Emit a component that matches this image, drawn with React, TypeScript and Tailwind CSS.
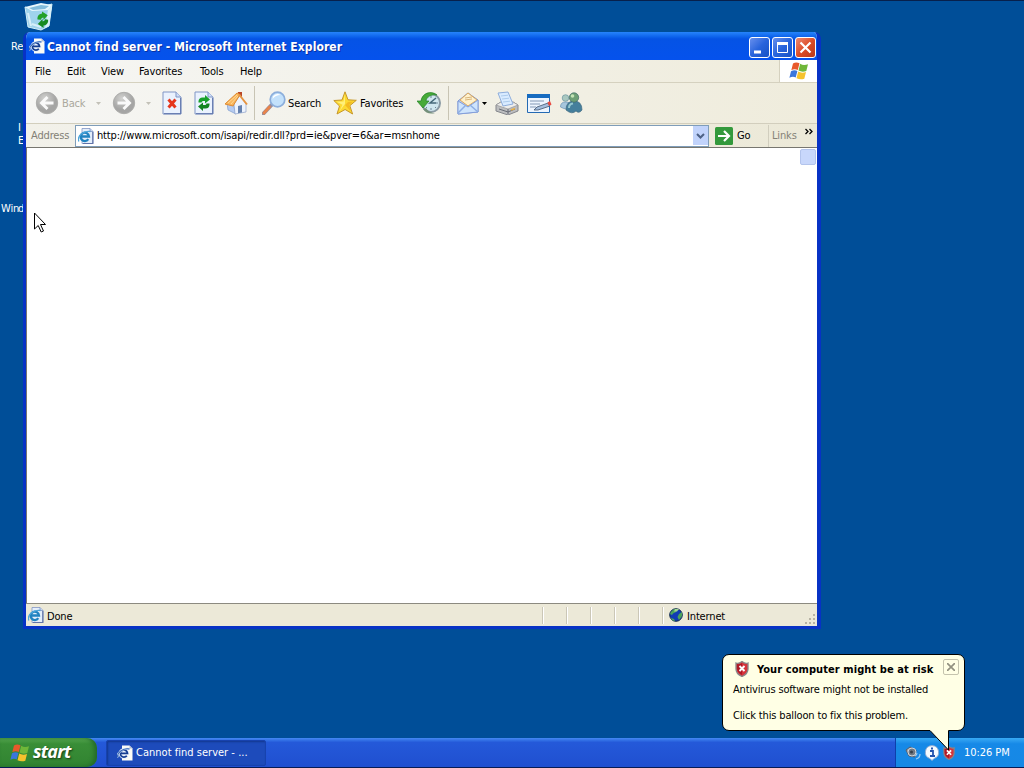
import React from 'react';

interface IconProps {
    className?: string;
}

const IePage: React.FC<IconProps> = ({ className }) => (
    <svg viewBox="0 0 16 16" className={className}>
        <path d="M4 .5h8l3 3v12H4z" fill="#e4eefb" stroke="#8296c4" strokeWidth=".8" />
        <path d="M12 .5v3h3" fill="#c9d8ef" stroke="#8296c4" strokeWidth=".8" />
        <path d="M14.800 4v11.600H5" fill="none" stroke="#6173a8" strokeWidth="1.200" />
        <path d="M10.300 11.200a4.200 4.200 0 1 1 .7-2.700H3.500" fill="none" stroke="#2183c0" strokeWidth="2.300" />
        <path d="M.8 13.500C-1 8 5 2.500 12.300 3.500" fill="none" stroke="#4ba5da" strokeWidth="1.300" />
    </svg>
);

const IeWhite: React.FC<IconProps> = ({ className }) => (
    <svg viewBox="0 0 16 16" className={className}>
        <path d="M5 .5h7.500l3 3v12H5z" fill="#fbfbf6" />
        <path d="M12.500 .5v3h3" fill="#b3bed3" />
        <path d="M9.800 10.700a3.600 3.600 0 1 1 .7-2.400H4" fill="none" stroke="#e6effc" strokeWidth="3.400" />
        <path d="M9.800 10.700a3.600 3.600 0 1 1 .7-2.400H4" fill="none" stroke="#153d91" strokeWidth="1.700" />
        <path d="M1 12.500C-1 8.500 6 2.500 12.500 4" fill="none" stroke="#c2d8f6" strokeWidth="2" />
        <path d="M1 12.500C-1 8.500 6 2.500 12.500 4" fill="none" stroke="#2b5bad" strokeWidth="1.100" />
    </svg>
);

const Flag: React.FC<IconProps> = ({ className }) => (
    <svg viewBox="0 0 20 18" className={className}>
        <path d="M4 1.500Q7-.5 10.500 1.200L8.800 8Q5.500 6.500 2.300 8.200z" fill="#e8592b" />
        <path d="M11.200 1.800Q14.500 4 19 2.200L17.300 9Q13 10.500 9.500 8.500z" fill="#6fb739" />
        <path d="M2 9.200Q5.500 7.500 8.400 9L6.700 15.500Q4 14 .4 15.700z" fill="#3b76dc" />
        <path d="M9.200 9.500Q12.500 11.500 17 10L15.300 16.700Q11.500 18.200 7.500 16.200z" fill="#f6c22d" />
    </svg>
);

const Recycle: React.FC<IconProps> = ({ className }) => (
    <svg viewBox="0 0 14 16" className={className}>
        <path d="M1.500 7.500V6Q2 2.500 5.500 2.500H8V0l5 4.500-5 4V6H6Q4.800 6 4.500 7.500z" fill="#18a02b" />
        <path d="M12.500 8.500V10Q12 13.500 8.500 13.500H6V16l-5-4.500 5-4V10h2q1.200 0 1.500-1.500z" fill="#128421" />
    </svg>
);

const RecycleBin: React.FC = () => (
    <svg viewBox="0 0 30 28" className="h-[28px] w-[30px]">
        <path d="M1 4 9 6 28 1 25 23 17 27 4 24z" fill="#9fd3ec" stroke="#d3effa" />
        <path d="M1 4 17 0 28 2 24 7 8 8z" fill="#e7f7fd" />
        <path d="M5 5 17 2l8 1-4 3-12 1z" fill="#82bcdc" />
        <path d="M24 7 28 2 25 23 21 25z" fill="#d9f1f8" />
        <path d="m4 10 3 13M8 21l9 3" stroke="#eefaff" strokeWidth="2" opacity=".7" />
        <g transform="translate(12 9) rotate(-4)">
            <path d="M1 7.500V6Q2 2 6 2V0l5.500 4L7 8.500V6Q5 6 4.300 8z" fill="#22a127" />
            <path d="M11.500 8.500V10q-1 4-5 4v2.500L1 12l5-4.500V10q2 0 2.700-2z" fill="#168b20" />
        </g>
    </svg>
);

const Disc: React.FC<{ flip?: boolean }> = ({ flip }) => (
    <svg viewBox="0 0 24 24" className="size-6 shrink-0">
        <defs>
            <radialGradient id={flip ? 'discF' : 'discB'} cx=".4" cy=".3">
                <stop offset="0" stopColor="#d2d2d0" />
                <stop offset="1" stopColor="#a5a5a4" />
            </radialGradient>
        </defs>
        <circle cx="12" cy="12" r="10.700" fill={flip ? 'url(#discF)' : 'url(#discB)'} stroke="#adadab" />
        <path
            d="M18.500 12H7M12.500 6 6.500 12l6 6"
            transform={flip ? 'translate(24 0) scale(-1 1)' : undefined}
            fill="none"
            stroke="#fafafa"
            strokeWidth="2.900"
        />
    </svg>
);

const PageIcon: React.FC<{ children?: React.ReactNode }> = ({ children }) => (
    <svg viewBox="0 0 20 24" className="h-6 w-5 shrink-0">
        <path d="M1 1h13l5 5v17H1z" fill="#eaf2fe" stroke="#8096c5" />
        <path d="M14 1v5h5" fill="#cfdef8" stroke="#8096c5" />
        <path d="M18.700 7v15.700H2" fill="none" stroke="#596fa8" />
        {children}
    </svg>
);

const HomeIcon: React.FC = () => (
    <svg viewBox="0 0 24 24" className="size-6 shrink-0">
        <path d="M14 1h4v7h-4z" fill="#b94829" />
        <path d="M3 12 8 9l4 14-8-4z" fill="#b5cbf1" stroke="#809bcc" strokeWidth=".7" />
        <path d="m10 13 6-9 6 9v8l-11 2z" fill="#edf3fd" stroke="#8ca0ca" strokeWidth=".7" />
        <path d="M1 13 13 2l3 1.500L9 15z" fill="#f9b55c" stroke="#df8b31" />
        <path d="m15 3.500 8 10" stroke="#e7943f" strokeWidth="2" />
        <path d="m14 15 4-1v7.500l-4 .8z" fill="#6480ad" />
        <path d="m4 12 9-8m-6 9 7-8" stroke="#ffd992" />
    </svg>
);

const SearchIcon: React.FC = () => (
    <svg viewBox="0 0 24 24" className="size-6 shrink-0">
        <path d="m9.500 14-8 8.500" stroke="#9a8e9b" strokeWidth="4" strokeLinecap="round" />
        <path d="m7.500 16-5.500 6" stroke="#e9844a" strokeWidth="2.600" strokeLinecap="round" />
        <circle cx="15.500" cy="8.500" r="7.300" fill="#c3e1fb" stroke="#8caedb" strokeWidth="1.700" />
        <path d="M10.500 8a5 5 0 0 1 8-4q-5 0-8 4" fill="#fff" />
    </svg>
);

const StarIcon: React.FC = () => (
    <svg viewBox="0 0 24 24" className="size-6 shrink-0">
        <path d="m12 .8 3 8 8.300.5-6.500 5.400 2.800 8.300-7.500-4.500L4 23l2.500-8L.8 9.500 9 9z" fill="#fcd931" stroke="#c6962a" strokeLinejoin="round" />
        <path d="m12 3-1.500 7.500-7 .3 6 3-3 6.500L12 13z" fill="#fff07a" />
        <path d="m12 14 5.500 6-1.500-6 4-3.500-5 .5z" fill="#f4ba20" />
    </svg>
);

const HistoryIcon: React.FC = () => (
    <svg viewBox="0 0 24 24" className="size-6 shrink-0">
        <circle cx="14" cy="12" r="9" fill="#cfe6ee" stroke="#8a9aa4" strokeWidth="2" />
        <path d="M14 5v2m0 10v2m7-7h-2M9 17l1-1m9-9-1 1m1 9-1-1" stroke="#6e8698" />
        <path d="m19 7-6 5h6" fill="none" stroke="#456879" strokeWidth="1.500" />
        <path d="M20 4C14-1 5 2 4 10H0l6 7 6-7H9C9.500 6 14 3 20 4" fill="#47aa38" stroke="#218126" strokeWidth=".7" />
        <path d="M6 18q4 6 12 4-6 0-9-5z" fill="#74907a" />
    </svg>
);

const MailIcon: React.FC = () => (
    <svg viewBox="0 0 24 24" className="size-6 shrink-0">
        <path d="m2 10 10-8 10 7v12L2 23z" fill="#b4ccf4" stroke="#7992ce" />
        <path d="m4 9 8-7 9 7-9 6z" fill="#fff1cb" stroke="#dfaa5c" />
        <path d="m2 10 10 6 10-7v12L2 23z" fill="#cee4fc" stroke="#849fda" />
        <path d="m2 22 8-8m12 7-8-7" stroke="#8daee3" strokeWidth="1.500" />
        <path d="m9 7 7-1m-7 3 7-1" stroke="#d8b57b" />
    </svg>
);

const PrintIcon: React.FC = () => (
    <svg viewBox="0 0 24 24" className="size-6 shrink-0">
        <path d="m1 14 5-3 3 2 9-2 5 3v6l-10 4L1 20z" fill="#bcbdbf" stroke="#85878c" />
        <path d="m1 14 12 4 10-4-5-3-9 2-3-2z" fill="#ededeb" stroke="#96979a" strokeWidth=".7" />
        <path d="m3 2 10-1 5 12-10 2z" fill="#d9ebff" stroke="#8eaddb" />
        <path d="m6 5 7-.8M7 8l7-.8M8 11l7-.8" stroke="#accbec" />
        <path d="m4 18 9 3 7-3M13 18v5" fill="none" stroke="#666b74" />
        <path d="m16 19 4-1.500" stroke="#ebb348" strokeWidth="1.500" />
    </svg>
);

const EditIcon: React.FC = () => (
    <svg viewBox="0 0 26 24" className="h-6 w-[26px] shrink-0">
        <path d="M1.500 3.500h22v18h-22z" fill="#edf5ff" stroke="#246ab3" />
        <path d="M1 3h23v4H1z" fill="#166bc0" />
        <path d="M4 10h14M4 13h10M4 16h6" stroke="#8398b4" />
        <path d="m8 19 3-3 11-4 2 3-12 4z" fill="#a4bddc" stroke="#41566f" strokeWidth=".8" />
        <path d="m21.500 11.500 2.500-1.500 1.500 3.500-2.500 1.500z" fill="#ea4c42" />
    </svg>
);

const PeopleIcon: React.FC = () => (
    <svg viewBox="0 0 24 24" className="size-6 shrink-0">
        <circle cx="6.500" cy="7" r="3.300" fill="#a9c8c0" stroke="#6d95a0" strokeWidth=".7" />
        <path d="M1.500 16q0-5 5-5 6 0 6 5-4 4-11 0" fill="#a7c6dd" stroke="#6c92b4" strokeWidth=".7" />
        <path d="M7 19q0-9 8-9t8 9q-3 4-6 1-4 4-10-1" fill="#457f9c" stroke="#416a81" strokeWidth=".7" />
        <circle cx="15" cy="6.500" r="4.700" fill="#6d9f75" stroke="#406b69" strokeWidth=".7" />
        <path d="M10 17q0-4 4-4.500" fill="none" stroke="#96c7cf" strokeWidth="2" />
        <circle cx="13.500" cy="5" r="1.800" fill="#c4e3b6" />
    </svg>
);

const Shield: React.FC<IconProps> = ({ className }) => (
    <svg viewBox="0 0 14 16" className={className}>
        <path d="M1 2q3 1 6-1.500Q10 3 13 2v6q0 5-6 7.500Q1 13 1 8z" fill="#d5343b" stroke="#85888a" strokeWidth="1.300" />
        <path d="M2 3q3 1 5-1v12Q2 11 2 7z" fill="#ae1726" />
        <path d="m4.500 5 5 5m0-5-5 5" stroke="#fff" strokeWidth="1.900" />
    </svg>
);

const Globe: React.FC = () => (
    <svg viewBox="0 0 14 14" className="size-3.5 shrink-0">
        <circle cx="7" cy="7" r="6.300" fill="#103cb4" stroke="#122a48" />
        <path d="M2 4q3-4 6-3L7 4 4 5.500 3 7 1 6zM10 6l3-2v4l-3 4-1.500-3zM2 10l3 1 1 2q-3 0-4-3" fill="#4ba35a" />
        <path d="M6 1h4L8 3.500H5z" fill="#a3d493" />
    </svg>
);

const CaptionButton: React.FC<{ kind: 'min' | 'max' | 'close' }> = ({ kind }) => (
    <button
        className={`flex size-[21px] shrink-0 items-center justify-center rounded-[3px] border border-white bg-linear-to-br ${
            kind === 'close' ? 'from-[#eb8971] via-[#dd4d26] to-[#b9381a]' : 'from-[#678fed] via-[#2864dc] to-[#1752c5]'
        }`}
    >
        <svg viewBox="0 0 19 19" className="size-[19px]">
            {kind === 'min' && <path d="M4 14h7" stroke="#fff" strokeWidth="3" />}
            {kind === 'max' && <path d="M4.500 4.500h10v10h-10z" fill="none" stroke="#fff" />}
            {kind === 'max' && <path d="M4 5.500h11" stroke="#fff" strokeWidth="3" />}
            {kind === 'close' && <path d="m4.500 4.500 10 10m0-10-10 10" stroke="#fff" strokeWidth="2.200" />}
        </svg>
    </button>
);

const Caret: React.FC<{ muted?: boolean }> = ({ muted }) => (
    <svg viewBox="0 0 5 3" className="h-[3px] w-[5px] shrink-0">
        <path d="M0 0h5L2.500 3z" fill={muted ? '#c3c1b8' : '#000'} />
    </svg>
);

const menuItems = [
    { label: 'File', width: 'w-8' },
    { label: 'Edit', width: 'w-[34px]' },
    { label: 'View', width: 'w-[38px]' },
    { label: 'Favorites', width: 'w-[61px]' },
    { label: 'Tools', width: 'w-10' },
    { label: 'Help', width: 'w-10' },
];

const BrowserWindow: React.FC = () => (
    <div className="absolute top-[32px] left-[23px] flex h-[597px] w-[798px] flex-col overflow-hidden rounded-t-[7px] border-x-[3px] border-r-[4px] border-b-[3px] border-[#0732c5] bg-[#ece9d8]">
        {/* Title bar */}
        <div className="flex h-7 shrink-0 items-center bg-linear-to-b from-[#2684fb] via-[#0553e5] via-25% to-[#0552ed] pr-px pl-[3px]">
            <IeWhite className="size-4 shrink-0" />
            <span className="ml-0.5 flex-1 pt-0.5 text-[12px] font-bold tracking-[0.09px] whitespace-nowrap text-white [text-shadow:1px_1px_#0831a0]">
                Cannot find server - Microsoft Internet Explorer
            </span>
            <div className="flex gap-[2px] pt-0.5">
                <CaptionButton kind="min" />
                <CaptionButton kind="max" />
                <CaptionButton kind="close" />
            </div>
        </div>

        {/* Menu */}
        <div className="flex h-[23px] shrink-0 border-b border-[#d5d1bf] bg-linear-to-r from-[#f6f6f4] to-[#efecdc]">
            <div className="flex flex-1 items-center pt-0.5 pl-[9px]">
                {menuItems.map((item) => (
                    <span key={item.label} className={`${item.width} whitespace-nowrap`}>
                        {item.label}
                    </span>
                ))}
            </div>
            <div className="flex w-[38px] items-center justify-center border-l border-[#d5d1bf] bg-white">
                <Flag className="h-[18px] w-5" />
            </div>
        </div>

        {/* Toolbar */}
        <div className="flex h-[41px] shrink-0 items-center border-b border-[#d2cebd] bg-linear-to-r from-[#f6f6f4] to-[#efecdc] pl-[9px]">
            <Disc />
            <span className="ml-[3px] w-[34px] pt-px text-[#aaa89d]">Back</span>
            <Caret muted />
            <div className="ml-[11px]"><Disc flip /></div>
            <div className="ml-2.5"><Caret muted /></div>
            <div className="ml-[11px]">
                <PageIcon><path d="m6.500 8.500 7 8m0-8-7 8" stroke="#e5371e" strokeWidth="3" /></PageIcon>
            </div>
            <div className="relative ml-3">
                <PageIcon />
                <Recycle className="absolute top-1 left-[3px] h-4 w-3.5" />
            </div>
            <div className="ml-[10px]"><HomeIcon /></div>
            <div className="ml-[6px] h-[34px] w-px bg-[#c8c4b4]" />
            <div className="ml-[7px]"><SearchIcon /></div>
            <span className="ml-[2px] w-[45px] pt-px">Search</span>
            <StarIcon />
            <span className="ml-[3px] w-[57px] pt-px">Favorites</span>
            <HistoryIcon />
            <div className="ml-[7px] h-[34px] w-px bg-[#c8c4b4]" />
            <div className="ml-[7px]"><MailIcon /></div>
            <div className="ml-[2px]"><Caret /></div>
            <div className="ml-[8px]"><PrintIcon /></div>
            <div className="ml-[7px]"><EditIcon /></div>
            <div className="ml-[7px]"><PeopleIcon /></div>
        </div>

        {/* Address bar */}
        <div className="flex h-[23px] shrink-0 items-center bg-linear-to-r from-[#f2f1ea] to-[#ece9d8]">
            <span className="w-[49px] pl-[5px] text-[#827f75]">Address</span>
            <div className="flex h-[22px] w-[634px] items-center border border-[#7f9db9] bg-white">
                <IePage className="ml-0.5 size-4" />
                <span className="ml-[3px] flex-1">http://www.microsoft.com/isapi/redir.dll?prd=ie&amp;pver=6&amp;ar=msnhome</span>
                <div className="flex h-[19px] w-[15px] items-center justify-center bg-[#c1d3fb]">
                    <svg viewBox="0 0 9 6" className="h-1.5 w-[9px]">
                        <path d="m1 1 3.500 3.500L8 1" fill="none" stroke="#4d6185" strokeWidth="2" />
                    </svg>
                </div>
            </div>
            <svg viewBox="0 0 18 18" className="ml-1.5 size-[18px] shrink-0">
                <rect width="18" height="18" rx="1.500" fill="#33993c" />
                <path d="M3 9h11M9 4l5 5-5 5" fill="none" stroke="#fff" strokeWidth="2.200" />
            </svg>
            <span className="ml-1 w-[31px]">Go</span>
            <div className="h-[22px] w-px bg-[#d1cebe]" />
            <span className="ml-[3px] w-[33px] text-[#858277]">Links</span>
            <svg viewBox="0 0 8 7" className="mb-2 h-[7px] w-2">
                <path d="m.5 1 2.500 2.500L.5 6m4-5L7 3.500 4.500 6" fill="none" stroke="#000" strokeWidth="1.300" />
            </svg>
        </div>

        {/* Page */}
        <div className="flex min-h-0 flex-1 justify-end border-t border-l border-[#77766f] bg-white pr-px">
            <div className="mt-px size-4 rounded-[2px] border border-[#b3c4ec] bg-[#c8d7fb]" />
        </div>

        {/* Status bar */}
        <div className="flex h-[23px] shrink-0 items-center border-t border-[#8c8a80] bg-[#ece9d8] pl-[2px]">
            <IePage className="size-4 shrink-0" />
            <span className="ml-[3px] flex-1 pt-[3px]">Done</span>
            <div className="flex h-[17px]">
                {[1, 2, 3, 4, 5].map((pane) => (
                    <div key={pane} className="w-6 border-l border-[#cbc7b7] shadow-[inset_1px_0_#fff]" />
                ))}
            </div>
            <div className="flex h-[17px] w-[143px] items-center border-l border-[#cbc7b7] pl-[6px] shadow-[inset_1px_0_#fff]">
                <Globe />
                <span className="ml-1 pt-[3px]">Internet</span>
            </div>
            <svg viewBox="0 0 11 11" className="mt-2 mr-px size-[11px] shrink-0">
                <path d="M8 1h2M8 5h2M4 5h2M8 9h2M4 9h2M0 9h2" stroke="#b7b3a4" strokeWidth="2" />
            </svg>
        </div>
    </div>
);

const Balloon: React.FC = () => (
    <div className="absolute top-[654px] left-[722px] z-10 h-[77px] w-[243px] rounded-[7px] border border-black bg-[#ffffe5] pl-2.5">
        <div className="flex h-[28px] items-center">
            <Shield className="ml-0.5 h-4 w-3.5 shrink-0" />
            <span className="ml-2 flex-1 pt-0.5 font-bold tracking-[0.08px] whitespace-nowrap">Your computer might be at risk</span>
            <button className="mr-[5px] mb-1 flex size-4 items-center justify-center rounded-[2px] border border-[#c5c4ae]">
                <svg viewBox="0 0 8 8" className="size-2">
                    <path d="m0 0 8 8m0-8L0 8" stroke="#929180" strokeWidth="1.700" />
                </svg>
            </button>
        </div>
        <p className="leading-[14px]">Antivirus software might not be installed</p>
        <p className="mt-3 leading-[14px]">Click this balloon to fix this problem.</p>
        <svg viewBox="0 0 21 23" className="absolute top-[74px] left-[206px] h-[23px] w-[21px]">
            <path d="M1 0v1.500L19.500 21V0z" fill="#ffffe5" />
            <path d="M1 1.500 19.500 21V1.500" fill="none" stroke="#000" />
        </svg>
    </div>
);

const Taskbar: React.FC = () => (
    <div className="absolute bottom-0 left-0 flex h-[30px] w-full border-b border-[#071b55] bg-linear-to-b from-[#4589f3] via-[#2459d9] via-15% to-[#204fd0]">
        <button className="flex w-[97px] shrink-0 items-center rounded-r-[10px] bg-linear-to-b from-[#5bad54] via-[#398e37] via-20% to-[#318331] pl-2.5 shadow-[inset_-3px_0_4px_#246b2a]">
            <Flag className="h-[18px] w-5 shrink-0" />
            <span className="ml-[3px] pb-1 font-['Open_Sans',sans-serif] text-[18px] font-bold tracking-[-0.8px] text-white italic [font-stretch:normal] [text-shadow:1px_1px_2px_#153d15]">
                start
            </span>
        </button>
        <div className="mt-[2px] ml-[9px] flex h-[26px] w-[160px] items-center rounded-[2px] border border-[#1742ae] bg-[#1d4bbb] pl-[10px] text-white shadow-[inset_1px_1px_2px_#12388f]">
            <IeWhite className="size-4" />
            <span className="ml-[3px] tracking-[0.02px] whitespace-nowrap">Cannot find server - ...</span>
        </div>
        <div className="ml-auto flex w-[129px] items-center border-l border-[#0d3fab] bg-linear-to-b from-[#38aaf4] via-[#1689e7] via-20% to-[#1688e5] pl-[9px] text-white">
            <svg viewBox="0 0 16 16" className="size-4 shrink-0">
                <path d="m1 5 4-3 6 3-1 7-6-1z" fill="#a4a7ae" stroke="#545d6b" />
                <circle cx="7" cy="7" r="4" fill="#727983" stroke="#d2d5d8" />
                <circle cx="6.500" cy="7" r="1.500" fill="#39404a" />
                <path d="M11 14q4-1 4-5m-5 2q2-1 2-3" fill="none" stroke="#9bcbf2" strokeWidth="1.200" />
            </svg>
            <svg viewBox="0 0 16 16" className="ml-[3px] size-4 shrink-0">
                <path d="M8 .6a7 6.700 0 0 1 2 13l-2 2-2-2A7 6.700 0 0 1 8 .6" fill="#f6fbff" stroke="#8daad2" />
                <path d="M6 6h3v5m-3 0h5" fill="none" stroke="#2454af" strokeWidth="1.800" />
                <path d="M7 2.500h2v2H7z" fill="#2454af" />
            </svg>
            <Shield className="ml-[3px] h-3.5 w-3 shrink-0" />
            <span className="ml-[9px] tracking-[-0.05px] whitespace-nowrap">10:26 PM</span>
        </div>
    </div>
);

const App: React.FC = () => {
    return (
        <div className="relative h-[768px] w-[1024px] overflow-hidden bg-[#004e98] font-['DejaVu_Sans_Condensed','DejaVu_Sans',sans-serif] text-[11px] leading-[12px] tracking-[-0.15px] text-black shadow-[inset_0_1px_#07204c] [font-stretch:condensed]">
            {/* Desktop icons */}
            <div className="absolute top-[3px] left-[24px]"><RecycleBin /></div>
            <span className="absolute top-[41px] left-[11px] w-3 overflow-hidden text-white">Re</span>
            <span className="absolute top-[121px] left-[18px] w-[5px] overflow-hidden leading-[13px] text-white">I<br />E</span>
            <span className="absolute top-[203px] left-[1px] w-[22px] overflow-hidden text-white">Win</span>
            <span className="absolute top-[203px] left-[18px] w-[5px] overflow-hidden text-white">d</span>

            <BrowserWindow />

            {/* Mouse pointer */}
            <svg viewBox="0 0 13 21" className="absolute top-[212px] left-[34px] h-[21px] w-[13px]">
                <path d="M.5 1v16l3.700-3.500 3 6.500 2.300-1-3-6.500h5z" fill="#fff" stroke="#000" />
            </svg>

            <Taskbar />
            <Balloon />
        </div>
    );
};

export default App;
